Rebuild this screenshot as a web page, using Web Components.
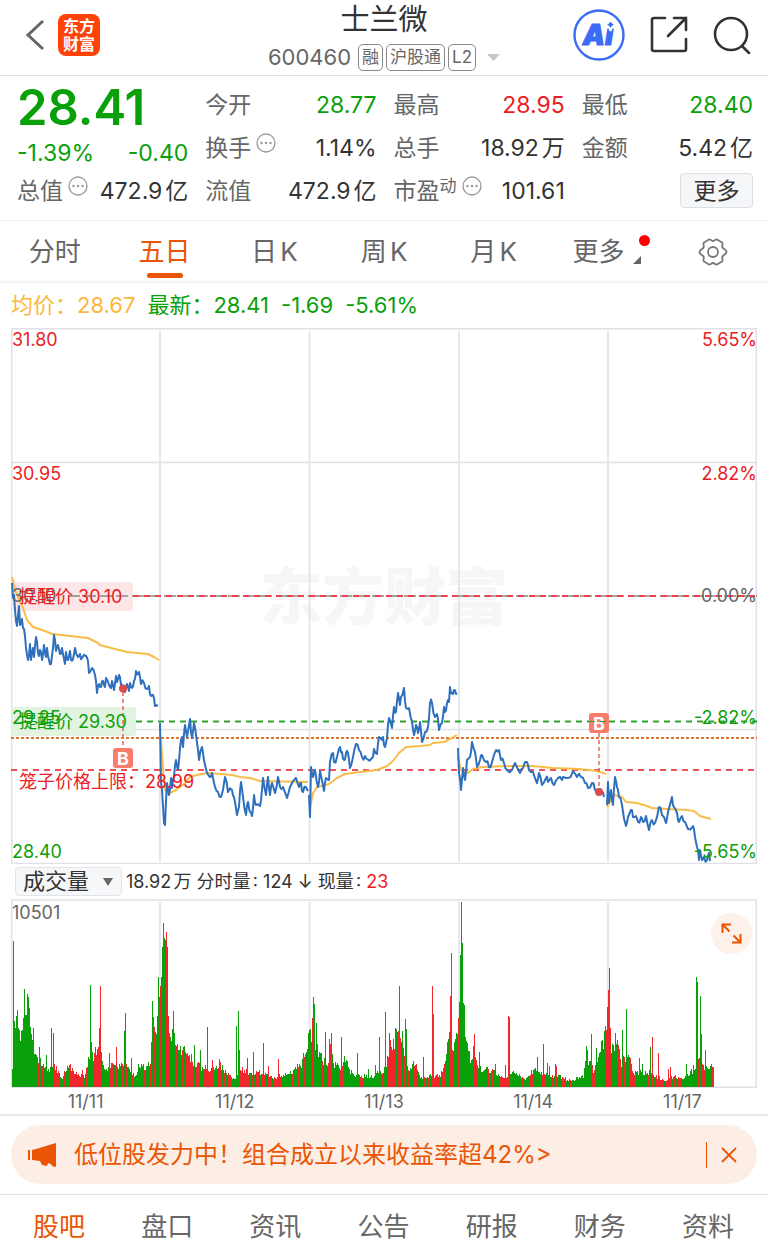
<!DOCTYPE html>
<html lang="zh-CN">
<head>
<meta charset="utf-8">
<meta name="viewport" content="width=device-width, initial-scale=1">
<title>士兰微 600460</title>
<style>
  :root {
    --up: #eb1c24;
    --down: #0aa00a;
    --accent: #ea5504;
    --text: #333;
    --muted: #666;
    --line: #e9e9e9;
    --grid: #dfe1e7;
  }

  body {
    margin: 0;
    background: #fff;
    color: var(--text);
    font-family: Inter, "Noto Sans CJK SC", sans-serif;
    text-autospace: normal;
  }
</style>
</head>
<body>
<stock-page></stock-page>

<script>
// Wraps the markup of an element in a template that is cloned into its shadow root
const html = (markup) => {
  const template = document.createElement("template");
  template.innerHTML = `
    <style>
      * { box-sizing: border-box; }
      button, select { font: inherit; color: inherit; border: none; background: none; padding: 0; margin: 0; cursor: pointer; }
      svg { display: block; }
    </style>
    ${markup}`;
  return template;
};

class BaseElement extends HTMLElement {
  constructor() {
    super();
    this._shadowRoot = this.attachShadow({ mode: "open" });
    this._shadowRoot.appendChild(this.constructor.template.content.cloneNode(true));
  }
}

class StockHeader extends BaseElement {
  static template = html(`
    <style>
      :host {
        display: grid;
        grid-template-columns: 1fr auto 1fr;
        height: 76px;
        border-bottom: 1px solid #e2e2e2;
      }
      .left, .right { display: flex; align-items: center; padding-bottom: 6px; }
      .left { padding-left: 24px; gap: 12px; }
      .right { justify-content: flex-end; gap: 25px; padding-right: 17px; }
      .logo {
        width: 42px; height: 42px;
        padding-top: 3px;
        border-radius: 8px;
        background: #ff4208;
        color: #fff;
        font-size: 16px; font-weight: 700; line-height: 18px;
        text-align: center;
      }
      h1 { margin: 0; padding-top: 4px; font-size: 29px; line-height: 32px; font-weight: 400; text-align: center; }
      .sub { display: flex; align-items: center; gap: 3px; margin-top: 8px; color: var(--muted); }
      .code { font-size: 22px; line-height: 27px; margin-right: 4px; }
      .tag {
        height: 27px; padding: 0 3px;
        border: 1px solid #888; border-radius: 5px;
        font-size: 17px; line-height: 25px;
      }
      .caret { margin-left: 8px; }
    </style>
    <div class="left">
      <button aria-label="返回">
        <svg width="22" height="34" viewBox="0 0 22 34" fill="none" stroke="#666" stroke-width="3"><path d="M19 3 4 17l15 14"/></svg>
      </button>
      <div class="logo">东方<br>财富</div>
    </div>
    <div>
      <h1><slot></slot></h1>
      <div class="sub">
        <span class="code">600460</span>
        <span class="tag">融</span><span class="tag">沪股通</span><span class="tag">L2</span>
        <svg class="caret" width="13" height="8" viewBox="0 0 13 8" fill="#c8c8c8"><path d="M0 0h13L6.500 7z"/></svg>
      </div>
    </div>
    <div class="right">
      <button aria-label="AI">
        <svg width="52" height="52" viewBox="0 0 52 52">
          <circle cx="26" cy="26" r="24.500" fill="none" stroke="#3a6cf6" stroke-width="2.400"/>
          <text x="25" y="36" text-anchor="middle" font-size="28" font-weight="900" font-style="italic" fill="#3a6cf6" stroke="#3a6cf6" stroke-linejoin="round">Ai</text>
          <path d="M37.500 9c1 4.500 2.200 5.700 6 6.700-3.800 1-5 2.200-6 6.300-1-4.100-2.200-5.300-6-6.300 3.800-1 5-2.200 6-6.700z" fill="#3a6cf6" stroke="#fff" stroke-width="2"/>
        </svg>
      </button>
      <button aria-label="分享">
        <svg width="38" height="38" viewBox="0 0 38 38" fill="none" stroke="#333" stroke-width="2.600" stroke-linecap="round">
          <path d="M15 2H4a2 2 0 0 0-2 2v29a2 2 0 0 0 2 2h30a2 2 0 0 0 2-2V23"/><path d="M24 2h12v12M36 2 18 20"/>
        </svg>
      </button>
      <button aria-label="搜索">
        <svg width="38" height="38" viewBox="0 0 38 38" fill="none" stroke="#333" stroke-width="2.600" stroke-linecap="round">
          <circle cx="18" cy="18" r="16"/><path d="m29 30 7 7"/>
        </svg>
      </button>
    </div>
  `);
}
customElements.define("stock-header", StockHeader);

class InfoDot extends BaseElement {
  static template = html(`
    <style>:host { display: block; margin-left: 5px; }</style>
    <svg width="20" height="20" viewBox="0 0 20 20" fill="#999">
      <circle cx="10" cy="10" r="9" fill="none" stroke="#999" stroke-width="1.300"/>
      <circle cx="5.500" cy="10" r="1.200"/><circle cx="10" cy="10" r="1.200"/><circle cx="14.500" cy="10" r="1.200"/>
    </svg>
  `);
}
customElements.define("info-dot", InfoDot);

class QuoteItem extends BaseElement {
  static template = html(`
    <style>
      :host { display: flex; align-items: center; height: 43px; font-size: 23px; line-height: 32px; white-space: nowrap; }
      .label { color: var(--muted); }
      .extra { display: flex; align-self: flex-start; padding-top: 7px; font-size: 17px; line-height: 20px; color: var(--muted); }
      .value { margin-left: auto; }
    </style>
    <span class="label"><slot name="label"></slot></span>
    <span class="extra"><slot name="extra"></slot></span>
    <span class="value"><slot></slot></span>
  `);
}
customElements.define("quote-item", QuoteItem);

class QuoteBoard extends BaseElement {
  static template = html(`
    <style>
      :host {
        display: grid;
        grid-template-columns: repeat(4, 1fr);
        column-gap: 17px;
        padding: 7px 15px 8px 17px;
        border-bottom: 1px solid #f2f2f2;
      }
      .price { display: flex; flex-direction: column; grid-row: span 2; color: var(--down); }
      .last { font-size: 49px; font-weight: 600; line-height: 50px; }
      .change { display: flex; justify-content: space-between; padding-top: 4px; font-size: 23px; line-height: 32px; }
      .up { color: var(--up); }
      .down { color: var(--down); }
      .more { justify-self: end; align-self: center; width: 73px; height: 35px; border: 1px solid #dcdfe4; border-radius: 4px; background: #f5f6f8; font-size: 23px; line-height: 32px; }
    </style>
    <div class="price">
      <span class="last">28.41</span>
      <div class="change"><span>-1.39%</span><span>-0.40</span></div>
    </div>
    <quote-item class="down"><span slot="label">今开</span>28.77</quote-item>
    <quote-item class="up"><span slot="label">最高</span>28.95</quote-item>
    <quote-item class="down"><span slot="label">最低</span>28.40</quote-item>
    <quote-item><span slot="label">换手</span><info-dot slot="extra"></info-dot>1.14%</quote-item>
    <quote-item><span slot="label">总手</span>18.92万</quote-item>
    <quote-item><span slot="label">金额</span>5.42亿</quote-item>
    <quote-item><span slot="label">总值</span><info-dot slot="extra"></info-dot>472.9亿</quote-item>
    <quote-item><span slot="label">流值</span>472.9亿</quote-item>
    <quote-item><span slot="label">市盈</span><span slot="extra">动</span><info-dot slot="extra"></info-dot>101.61</quote-item>
    <button class="more">更多</button>
  `);
}
customElements.define("quote-board", QuoteBoard);

class TabItem extends BaseElement {
  static template = html(`
    <style>
      :host { display: flex; justify-content: center; flex: 1; color: var(--muted); }
      :host([active]) { color: var(--accent); }
      button { display: flex; flex-direction: column; align-items: center; font-size: 26px; line-height: 28px; white-space: nowrap; }
      i { display: none; width: 36px; height: 5px; margin-top: 7px; border-radius: 3px; background: var(--accent); }
      :host([active][underline]) i { display: block; }
    </style>
    <button><span><slot></slot></span><i></i></button>
  `);
}
customElements.define("tab-item", TabItem);

class PeriodTabs extends BaseElement {
  static template = html(`
    <style>
      :host { display: flex; height: 62px; padding-top: 17px; border-bottom: 2px solid #f4f4f4; }
      .more { position: relative; display: inline-block; padding-right: 10px; }
      .dot { position: absolute; right: -16px; top: -3px; width: 11px; height: 11px; border-radius: 50%; background: #f00; }
      .corner { position: absolute; right: -7px; bottom: 2px; }
    </style>
    <tab-item>分时</tab-item>
    <tab-item active underline>五日</tab-item>
    <tab-item>日K</tab-item>
    <tab-item>周K</tab-item>
    <tab-item>月K</tab-item>
    <tab-item><span class="more">更多<span class="dot"></span>
      <svg class="corner" width="8" height="8" viewBox="0 0 8 8"><path d="M8 0v8H0z" fill="#666"/></svg></span></tab-item>
    <tab-item aria-label="设置">
      <svg width="30" height="28" viewBox="-15 -14 30 28" fill="none" stroke="#777" stroke-width="1.800" stroke-linejoin="round">
        <path d="M-4-12.500C-2-13-2-11 0-11s2-2 4-1.500l5 3c1.500 1.500-.5 3 .5 5S14-2.500 13.500 0 10.500 2.500 9.500 4.500s1 3.500-.5 5l-5 3c-2 .5-2-1.500-4-1.500s-2 2-4 1.500l-5-3c-1.500-1.500.5-3-.5-5S-14 2.500-13.500 0-10.500-2.500-9.500-4.500s-1-3.500.5-5z"/>
        <circle r="5"/>
      </svg>
    </tab-item>
  `);
}
customElements.define("period-tabs", PeriodTabs);

class PriceLegend extends BaseElement {
  static template = html(`
    <style>
      :host { display: flex; gap: 12px; padding: 8px 11px; font-size: 22px; line-height: 29px; color: var(--down); white-space: nowrap; }
      .avg { color: #fbb73c; }
    </style>
    <span class="avg">均价：28.67</span>
    <span>最新：28.41</span>
    <span>-1.69</span>
    <span>-5.61%</span>
  `);
}
customElements.define("price-legend", PriceLegend);

// Small repeatable noise, so the chart looks the same on every load
const noise = (n) => {
  const v = Math.sin(n * 127.1) * 43758.5453;
  return v - Math.floor(v);
};

const parse = (text) => text.trim().split(/\s+/).map((pair) => pair.split(",").map(Number));

const PRICE_DAYS = [
  "12,583 13,598 14,595 15,610 17,626 19,606 20,625 22,619 23,628 25,636 26,648 28,660 29,655 30,644 31,660 33,648 34,657 36,637 37,642 38,653 39,656 40,650 42,660 44,645 46,657 47,648 49,660 51,664 53,648 54,635 56,651 58,645 60,654 62,648 64,659 65,664 66,652 68,660 70,651 71,660 73,659 74,654 75,648 78,657 80,654 82,658 86,656 88,661 89,673 92,668 95,675 96,681 97,693 99,684 101,687 103,681 105,687 106,678 109,685 111,688 112,681 114,690 116,676 117,682 119,675 121,685 123,690 125,692 127,684 129,691 130,683 132,688 134,681 136,671 138,674 139,672 141,684 144,683 147,689 149,686 151,696 153,695 155,706 158,706",
  "160,723 161,782 162,790 164,823 165,825 167,783 169,795 171,778 172,788 174,777 176,760 178,770 180,748 182,737 183,747 185,725 187,737 190,719 192,738 194,723 197,743 199,760 202,747 204,760 207,773 210,777 212,773 215,787 218,792 221,797 225,777 228,792 232,790 234,797 237,815 239,807 241,782 243,797 246,815 248,802 251,813 252,816 254,795 256,805 260,806 262,790 263,778 266,795 268,777 270,795 272,783 275,793 278,777 280,787 283,787 287,798 290,787 296,778 299,787 301,783 303,792 306,787 308,791",
  "309,795 310,817 311,767 313,777 315,770 318,787 320,771 324,791 326,778 329,780 330,762 333,753 334,762 337,757 340,747 342,752 344,760 346,753 348,753 350,768 353,757 356,744 359,750 362,757 365,756 367,759 372,758 374,749 377,754 379,737 382,740 383,737 385,747 387,738 389,718 392,728 394,707 396,712 398,693 400,705 401,697 404,688 406,708 409,708 412,722 414,735 416,725 418,733 420,722 422,742 425,732 428,727 430,703 432,703 435,717 437,714 439,730 442,723 444,707 445,712 447,703 449,702 450,687 452,693 454,690 456,694 457,693",
  "458,748 459,773 461,790 463,768 465,780 467,760 470,757 472,742 475,752 477,767 480,760 482,755 486,762 489,767 492,762 496,750 499,750 501,760 504,763 507,770 512,770 515,763 520,773 523,768 527,762 529,770 533,772 537,783 539,773 542,785 546,778 548,782 551,778 554,785 558,778 562,780 563,777 568,778 573,771 577,777 581,777 585,783 588,788 592,783 595,790 599,792 602,793 604,797",
  "607,805 608,782 609,803 611,790 613,805 615,777 617,787 619,797 622,805 626,826 628,817 631,810 633,817 636,816 638,822 641,817 643,822 646,816 649,830 652,820 655,823 659,807 662,815 666,823 668,812 672,797 674,807 677,813 679,822 682,816 685,822 688,829 693,826 695,837 697,847 699,860 700,850 702,860 704,857 707,860 709,853 710,861",
];

const AVERAGE_DAYS = [
  "12,577 16,593 22,605 27,620 33,627 45,631 52,634 70,636 88,638 98,643 100,645 115,649 127,652 148,654 154,657 159,660",
  "161,740 163,770 165,790 168,794 176,790 185,783 190,777 197,775 207,773 220,774 232,775 240,777 250,778 260,781 308,782",
  "310,808 313,793 317,787 329,784 337,778 345,774 360,772 377,770 387,766 393,761 399,753 406,747 420,746 430,745 433,743 444,742 450,739 457,735",
  "458,757 461,770 468,773 473,769 483,767 510,766 533,766 553,768 580,769 597,771 606,774",
  "607,807 612,798 615,795 622,797 626,802 637,803 647,806 652,808 667,809 687,810 694,811 700,816 711,819",
];

class PriceChart extends BaseElement {
  static template = html(`
    <style>
      :host { display: block; padding: 0 11px; }
      svg { width: 100%; height: auto; font-size: 18px; }
      .grid { stroke: var(--grid); stroke-width: 1.500; fill: none; }
      .up { fill: var(--up); }
      .down { fill: var(--down); }
      .flat { fill: var(--muted); }
      .right { text-anchor: end; }
      .watermark { font-size: 62px; font-weight: 900; fill: #f6f6f6; text-anchor: middle; }
      .price { fill: none; stroke: #2e70bd; stroke-width: 2; stroke-linejoin: round; }
      .average { fill: none; stroke: #f8bd48; stroke-width: 2; stroke-linejoin: round; }
      .mark { fill: #fff; font-size: 18px; font-weight: 700; text-anchor: middle; }
    </style>
    <svg viewBox="11 328 746 536">
      <text class="watermark" x="384" y="620">东方财富</text>
      <path class="grid" d="M11 328.700H757M11 462.500H757M11 729.500H757M11 863.500H757M11.700 329V864M756.300 329V864M160 331V862M309.500 331V862M459 331V862M608 331V862"/>

      <rect x="12" y="582" width="121" height="29" rx="3" fill="#fde6e7"/>
      <rect x="12" y="707" width="124" height="29" rx="3" fill="#e2f3e2"/>

      <path d="M68 596H757" stroke="#888" stroke-width="1.500" stroke-dasharray="12 4"/>
      <path d="M133 596H757" stroke="#ee4248" stroke-width="2" stroke-dasharray="6 5"/>
      <path d="M136 721.500H757" stroke="#30a030" stroke-width="2" stroke-dasharray="6 5"/>
      <path d="M11 738H757" stroke="#e4752e" stroke-width="2" stroke-dasharray="3 2"/>
      <path d="M11 770H757" stroke="#ee5258" stroke-width="2" stroke-dasharray="6 5"/>

      <g id="lines"></g>

      <g fill="#f87b6c">
        <path d="M123 692v56M599 733v56" stroke="#e8645a" stroke-width="1.500" stroke-dasharray="4 3"/>
        <circle cx="123" cy="688.500" r="4" fill="#dc4a4a"/>
        <circle cx="599" cy="792" r="4" fill="#dc4a4a"/>
        <rect x="113" y="748" width="20" height="20" rx="3"/>
        <rect x="589" y="713" width="20" height="20" rx="3"/>
      </g>
      <text class="mark" x="123" y="765">B</text>
      <text class="mark" x="599" y="730">B</text>
      <path d="M589 721.500h20" stroke="#30a030" stroke-width="1" stroke-dasharray="6 5"/>

      <text class="up" x="12" y="346">31.80</text>
      <text class="up" x="12" y="480">30.95</text>
      <text class="flat" x="12" y="602">30.10</text>
      <text class="down" x="12" y="724">29.25</text>
      <text class="down" x="12" y="858">28.40</text>
      <text class="up right" x="757" y="346">5.65%</text>
      <text class="up right" x="757" y="480">2.82%</text>
      <text class="flat right" x="757" y="602">0.00%</text>
      <text class="down right" x="757" y="724">-2.82%</text>
      <text class="down right" x="757" y="858">-5.65%</text>

      <text class="up" x="19" y="603">提醒价 30.10</text>
      <text class="down" x="19" y="728">提醒价 29.30</text>
      <text class="up" x="19" y="788">笼子价格上限：28.99</text>
    </svg>
  `);

  connectedCallback() {
    const average = AVERAGE_DAYS.map((day) => `<polyline class="average" points="${day}"/>`);
    const price = PRICE_DAYS.map((day) => `<polyline class="price" points="${this._roughen(parse(day))}"/>`);
    this._shadowRoot.querySelector("#lines").innerHTML = average.join("") + price.join("");
  }

  // Adds the minute to minute wobble between the main turning points
  _roughen(points) {
    const result = [];
    points.forEach(([x, y], i) => {
      result.push(`${x},${y}`);
      const next = points[i + 1];
      if (next && next[0] - x > 1) {
        const wobble = (noise(x) - 0.5) * 7;
        result.push(`${(x + next[0]) / 2},${((y + next[1]) / 2 + wobble).toFixed(1)}`);
      }
    });
    return result.join(" ");
  }
}
customElements.define("price-chart", PriceChart);

class VolumeBar extends BaseElement {
  static template = html(`
    <style>
      :host { display: flex; align-items: center; gap: 4px; height: 35px; padding: 0 15px; font-size: 18px; line-height: 24px; white-space: nowrap; }
      label { position: relative; width: 107px; }
      select {
        appearance: none;
        width: 100%; height: 29px; padding-left: 7px;
        border: 1px solid #e2e4ea; border-radius: 4px;
        background: #f6f7f9;
        font-size: 22px; line-height: 27px;
      }
      svg { position: absolute; right: 9px; top: 11px; pointer-events: none; }
      b { font-weight: 400; color: var(--up); }
    </style>
    <label>
      <select aria-label="指标"><option>成交量</option><option>成交额</option></select>
      <svg width="10" height="8" viewBox="0 0 10 8"><path d="M0 0h10L5 8z" fill="#666"/></svg>
    </label>
    <span>18.92万 分时量: 124 ↓ 现量: <b>23</b></span>
  `);
}
customElements.define("volume-bar", VolumeBar);

const VOLUME_BASE = parse(`
  12,1070 13,1010 19,1022 20,1035 22,1033 26,1010 28,998 30,1017 31,1037 34,1055 36,1060 42,1063 48,1070 55,1066 62,1078 66,1066
  75,1072 85,1076 87,1062 91,1052 95,1060 98,1050 102,1060 105,1070 113,1063 119,1067 122,1066 127,1067 135,1076 138,1067 146,1067
  150,1058 152,1028 155,1033 157,1025 159,1002 162,990 165,959 168,1016 170,1027 173,1040 177,1042 180,1050 188,1052 192,1060 197,1065
  209,1070 219,1064 225,1072 234,1079 242,1070 250,1073 257,1072 265,1074 272,1078 285,1074 295,1069 300,1065 306,1050 310,1032
  315,1045 321,1055 327,1066 330,1050 333,1062 340,1066 344,1058 350,1072 355,1076 365,1076 373,1076 379,1070 385,1070 388,1055
  390,1045 392,1052 395,1032 400,1032 402,1037 406,1060 408,1072 412,1062 417,1067 420,1078 430,1076 440,1076 443,1068 446,1050
  449,1040 454,1045 457,1040 460,1000 463,1000 465,1030 467,1042 470,1058 474,1055 477,1063 481,1070 492,1070 502,1078 512,1072
  525,1080 534,1068 540,1074 552,1076 558,1076 571,1081 583,1076 585,1064 590,1060 593,1072 596,1060 602,1045 604,1033 608,1035
  612,1050 617,1045 621,1063 624,1058 628,1055 632,1072 642,1073 648,1072 654,1075 665,1081 673,1076 680,1079 690,1073 695,1068
  700,1058 703,1065 709,1070 713,1066
`);

// Third value: 1 for a rising minute, 0 for a falling one
const VOLUME_SPIKES = parse(`
  13,941,0 17,1010,0 24,989,0 33,1028,1 39,1047,0 46,1055,0 51,1028,0 53,1033,0 70,1064,1 82,1070,1 90,985,0 91,1042,1 95,1047,0
  99,1028,0 100,986,1 101,1052,0 109,1053,0 116,1047,1 124,1031,0 125,1013,0 131,1058,1 141,1064,1 152,1001,0 153,1017,0 158,977,0
  159,997,1 160,986,1 162,947,0 163,923,1 164,938,0 166,932,1 167,947,0 168,1016,1 173,1011,0 184,1046,0 194,1045,0 200,1050,0
  207,1027,0 212,1060,1 219,1059,0 236,1026,0 238,1011,0 239,1050,1 247,1058,0 253,1052,0 263,1043,1 268,1066,1 278,1059,1 308,1033,0
  309,1030,1 312,1018,1 313,997,1 314,1004,0 316,1023,0 325,1032,0 329,1039,1 331,1033,1 341,1037,1 344,1056,0 357,1053,1 368,1069,0
  375,1065,1 379,1037,1 385,1012,1 389,1033,1 399,986,1 405,1019,1 406,1029,0 423,1057,0 432,986,1 433,1014,1 449,1032,1 450,996,1
  451,953,1 456,1033,0 458,1018,1 460,955,0 461,902,0 462,943,0 463,1003,1 473,1046,1 474,1034,1 479,1052,1 495,1064,1 505,1065,1
  508,1016,1 509,1017,0 537,1057,0 543,1044,0 547,1063,1 549,1066,1 555,1064,0 556,1066,1 586,1046,0 587,1050,1 591,1034,0 596,1048,0
  599,1053,1 607,1007,0 608,990,1 609,968,1 610,1028,1 615,1033,1 622,1030,0 626,1009,0 630,1058,1 639,1058,1 642,1064,0 650,1047,0
  652,1037,1 658,1053,1 668,1069,1 670,1067,1 686,1064,0 693,1065,0 696,977,0 697,982,0 700,996,0 701,1034,0 705,1050,1 711,1064,0
`);

// Stretches of the week in which buyers had the upper hand
const RISING = [[53, 80], [91, 119], [128, 151], [175, 192], [209, 230], [240, 285], [290, 308], [327, 345], [380, 408], [428, 458], [466, 478], [630, 640]];

class VolumeChart extends BaseElement {
  static template = html(`
    <style>
      :host { display: block; padding: 0 11px; border-bottom: 2px solid var(--line); color: var(--muted); }
      .plot { position: relative; }
      .plot svg { width: 100%; height: auto; font-size: 18px; }
      .grid { stroke: var(--grid); stroke-width: 1.500; fill: none; }
      .plot button { position: absolute; right: 5px; top: 14px; width: 41px; height: 41px; padding: 10px; border-radius: 50%; background: #fdf1ea; }
      .plot button svg { width: 21px; height: 21px; }
      .dates { display: flex; height: 26px; padding-top: 2px; font-size: 18px; line-height: 24px; }
      .dates span { flex: 1; text-align: center; }
    </style>
    <div class="plot">
      <svg viewBox="11 899 746 189">
        <path class="grid" d="M11 900H757M11 1087.300H757M11.700 899V1088M756.300 899V1088M160 902V1087M309.500 902V1087M459 902V1087M608 902V1087"/>
        <g id="bars" shape-rendering="crispEdges"></g>
        <text x="12" y="919" fill="#666">10501</text>
      </svg>
      <button aria-label="全屏">
        <svg viewBox="0 0 21 21" fill="none" stroke="#ea5504" stroke-width="2"><path d="M1.500 10V1.500H10M1.500 1.500l7 7M19.500 11v8.500H11M19.500 19.500l-7-7"/></svg>
      </button>
    </div>
    <div class="dates"><span>11/11</span><span>11/12</span><span>11/13</span><span>11/14</span><span>11/17</span></div>
  `);

  connectedCallback() {
    const spikes = new Map(VOLUME_SPIKES.map(([x, top, rising]) => [x, [top, rising]]));
    const paths = ["", ""];
    for (let x = 12; x <= 713; x++) {
      let top = this._baseAt(x);
      top += (noise(x) - 0.45) * (1087 - top) * 0.4;
      const inRise = RISING.some(([from, to]) => x >= from && x <= to);
      let rising = noise(x + 1000) < (x < 32 ? 0.03 : inRise ? 0.6 : 0.28) ? 1 : 0;
      if (spikes.has(x)) {
        [top, rising] = spikes.get(x);
      }
      paths[rising] += `M${x} 1087V${Math.round(top)}h1V1087z`;
    }
    this._shadowRoot.querySelector("#bars").innerHTML =
      `<path fill="#0aa00a" d="${paths[0]}"/><path fill="#f0272c" d="${paths[1]}"/>`;
  }

  _baseAt(x) {
    const i = VOLUME_BASE.findIndex((point) => point[0] >= x);
    if (i <= 0) return VOLUME_BASE[0][1];
    const [x0, y0] = VOLUME_BASE[i - 1];
    const [x1, y1] = VOLUME_BASE[i];
    return y0 + ((y1 - y0) * (x - x0)) / (x1 - x0);
  }
}
customElements.define("volume-chart", VolumeChart);

class PromoBanner extends BaseElement {
  static template = html(`
    <style>
      :host { display: block; padding: 9px 11px 10px; color: var(--accent); border-bottom: 1px solid #e2e2e2; text-autospace: no-autospace; }
      .pill { display: flex; align-items: center; height: 59px; padding: 0 20px 0 17px; border-radius: 30px; background: #fceee5; }
      a { flex: 1; margin-left: 17px; color: inherit; text-decoration: none; font-size: 24px; line-height: 32px; }
      .close { display: flex; align-items: center; padding-left: 14px; height: 26px; border-left: 1px solid var(--accent); }
    </style>
    <div class="pill">
      <svg width="29" height="24" viewBox="0 0 29 24" fill="#ea5504"><path d="M0 7h2v10H0zM4 7l4-1L28 0v24l-4-1-1-2-3-1-1 3-5-1-2-4-8-1z"/></svg>
      <a href="#"><slot></slot></a>
      <button class="close" aria-label="关闭">
        <svg width="16" height="16" viewBox="0 0 16 16" fill="none" stroke="#ea5504" stroke-width="1.800"><path d="m1 1 14 14M15 1 1 15"/></svg>
      </button>
    </div>
  `);
}
customElements.define("promo-banner", PromoBanner);

class SectionTabs extends BaseElement {
  static template = html(`
    <style>:host { display: flex; padding: 18px 6px 0 5px; }</style>
    <slot></slot>
  `);
}
customElements.define("section-tabs", SectionTabs);

class StockPage extends BaseElement {
  static template = html(`
    <style>:host { display: block; }</style>
    <stock-header>士兰微</stock-header>
    <quote-board></quote-board>
    <period-tabs></period-tabs>
    <price-legend></price-legend>
    <price-chart></price-chart>
    <volume-bar></volume-bar>
    <volume-chart></volume-chart>
    <promo-banner>低位股发力中！组合成立以来收益率超42%&gt;</promo-banner>
    <section-tabs>
      <tab-item active>股吧</tab-item>
      <tab-item>盘口</tab-item>
      <tab-item>资讯</tab-item>
      <tab-item>公告</tab-item>
      <tab-item>研报</tab-item>
      <tab-item>财务</tab-item>
      <tab-item>资料</tab-item>
    </section-tabs>
  `);
}
customElements.define("stock-page", StockPage);
</script>
</body>
</html>
